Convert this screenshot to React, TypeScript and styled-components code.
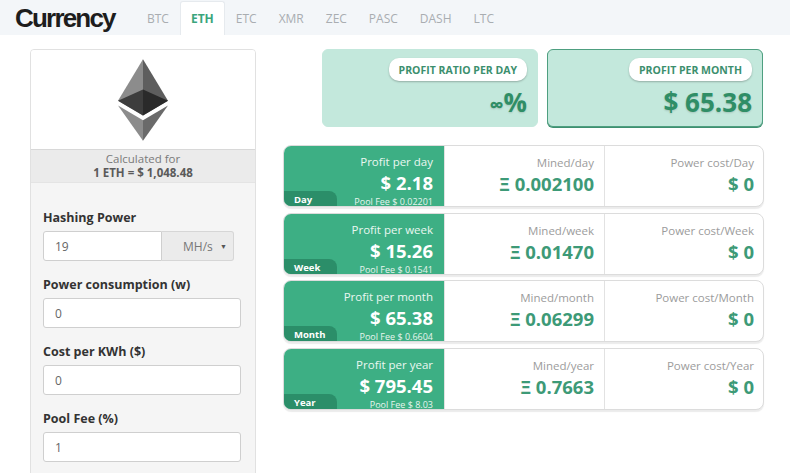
import React from "react";
import styled, { createGlobalStyle } from "styled-components";

const GlobalStyle = createGlobalStyle`
  body {
    margin: 0;
    background: #fff;
    font-family: "Open Sans", "Liberation Sans", sans-serif;
    color: #333;
  }
  * { box-sizing: border-box; }
`;

const TABS = ["BTC", "ETH", "ETC", "XMR", "ZEC", "PASC", "DASH", "LTC"];

type Period = {
  badge: string;
  name: string;
  profit: string;
  fee: string;
  mined: string;
};

const PERIODS: Period[] = [
  { badge: "Day", name: "day", profit: "$ 2.18", fee: "$ 0.02201", mined: "0.002100" },
  { badge: "Week", name: "week", profit: "$ 15.26", fee: "$ 0.1541", mined: "0.01470" },
  { badge: "Month", name: "month", profit: "$ 65.38", fee: "$ 0.6604", mined: "0.06299" },
  { badge: "Year", name: "year", profit: "$ 795.45", fee: "$ 8.03", mined: "0.7663" },
];

const EthLogo = () => (
  <svg width="50" height="82" viewBox="0 0 256 417">
    <polygon fill="#5e5e5e" points="127.96,0 125.17,9.5 125.17,285.17 127.96,287.96 255.92,212.32" />
    <polygon fill="#8c8c8c" points="127.96,0 0,212.32 127.96,287.96 127.96,154.16" />
    <polygon fill="#6a6a6a" points="127.96,312.19 126.39,314.11 126.39,412.31 127.96,416.91 256,236.59" />
    <polygon fill="#8c8c8c" points="127.96,416.91 127.96,312.19 0,236.59" />
    <polygon fill="#2a2a2a" points="127.96,287.96 255.92,212.32 127.96,154.16" />
    <polygon fill="#3d3d3d" points="0,212.32 127.96,287.96 127.96,154.16" />
  </svg>
);

export default function App() {
  return (
    <>
      <GlobalStyle />
      <Header>
        <Title>Currency</Title>
        <Tabs>
          {TABS.map((t) => (
            <Tab key={t} $active={t === "ETH"}>
              {t}
            </Tab>
          ))}
        </Tabs>
      </Header>
      <Main>
        <SidePanel>
          <LogoBox>
            <EthLogo />
          </LogoBox>
          <PriceStrip>
            <PriceLabel>Calculated for</PriceLabel>
            <PriceValue>1 ETH = $ 1,048.48</PriceValue>
          </PriceStrip>
          <Form>
            <Field>
              <Label>Hashing Power</Label>
              <InputGroup>
                <GroupInput defaultValue="19" />
                <UnitSelect>
                  <span>MH/s</span>
                  <Caret>▼</Caret>
                </UnitSelect>
              </InputGroup>
            </Field>
            <Field>
              <Label>Power consumption (w)</Label>
              <Input defaultValue="0" />
            </Field>
            <Field>
              <Label>Cost per KWh ($)</Label>
              <Input defaultValue="0" />
            </Field>
            <Field>
              <Label>Pool Fee (%)</Label>
              <Input defaultValue="1" />
            </Field>
          </Form>
        </SidePanel>
        <Results>
          <Summary>
            <SummaryCard>
              <Pill>PROFIT RATIO PER DAY</Pill>
              <SummaryValue>
                <Infinity>∞</Infinity>%
              </SummaryValue>
            </SummaryCard>
            <SummaryCard $highlight>
              <Pill>PROFIT PER MONTH</Pill>
              <SummaryValue>$ 65.38</SummaryValue>
            </SummaryCard>
          </Summary>
          <Rows>
            {PERIODS.map((p) => (
              <Row key={p.badge}>
                <ProfitCell>
                  <ProfitLabel>Profit per {p.name}</ProfitLabel>
                  <ProfitValue>{p.profit}</ProfitValue>
                  <PoolFee>Pool Fee {p.fee}</PoolFee>
                  <Badge>{p.badge}</Badge>
                </ProfitCell>
                <StatCell>
                  <StatLabel>Mined/{p.name}</StatLabel>
                  <StatValue>Ξ {p.mined}</StatValue>
                </StatCell>
                <StatCell>
                  <StatLabel>Power cost/{p.badge}</StatLabel>
                  <StatValue>$ 0</StatValue>
                </StatCell>
              </Row>
            ))}
          </Rows>
        </Results>
      </Main>
    </>
  );
}

const Header = styled.header`
  display: flex;
  align-items: flex-end;
  height: 35px;
  padding-left: 15px;
  background: #f3f6f9;
`;

const Title = styled.h1`
  width: 121px;
  margin: 0;
  align-self: center;
  font-family: "Liberation Sans", "Arial", sans-serif;
  font-weight: 700;
  font-size: 26px;
  line-height: 30px;
  color: #1d1d1d;
  letter-spacing: -1.8px;
`;

const Tabs = styled.nav`
  display: flex;
  height: 34px;
`;

const Tab = styled.div<{ $active?: boolean }>`
  display: flex;
  align-items: center;
  padding: 0 10px;
  font-size: 12px;
  color: ${(p) => (p.$active ? "#3aa57c" : "#a9adb1")};
  font-weight: ${(p) => (p.$active ? 700 : 400)};
  background: ${(p) => (p.$active ? "#fff" : "transparent")};
  border: 1px solid ${(p) => (p.$active ? "#e6eaee" : "transparent")};
  border-bottom: none;
  border-radius: 3px 3px 0 0;
`;

const Main = styled.div`
  display: grid;
  grid-template-columns: 226px 481px;
  gap: 27px;
  padding: 14px 0 0 30px;
`;

const SidePanel = styled.aside`
  border: 1px solid #e1e1e1;
  border-radius: 4px 4px 0 0;
  background: #f5f5f5;
  overflow: hidden;
`;

const LogoBox = styled.div`
  display: flex;
  justify-content: center;
  align-items: center;
  height: 99px;
  background: #fff;
`;

const PriceStrip = styled.div`
  height: 34px;
  padding-top: 2px;
  background: #ebebeb;
  border-top: 1px solid #d8d8d8;
  border-bottom: 1px solid #e4e4e4;
  text-align: center;
  font-size: 11.5px;
  line-height: 14px;
  color: #7a7a7a;
`;

const PriceLabel = styled.div``;

const PriceValue = styled.div`
  font-weight: 700;
  color: #5a5a5a;
`;

const Form = styled.div`
  display: flex;
  flex-direction: column;
  gap: 15px;
  padding: 26px 14px 20px 12px;
`;

const Field = styled.div`
  display: flex;
  flex-direction: column;
  gap: 5px;
`;

const Label = styled.label`
  font-size: 12.5px;
  font-weight: 700;
  color: #333;
`;

const Input = styled.input`
  width: 198px;
  height: 30px;
  padding: 0 11px;
  border: 1px solid #cfcfcf;
  border-radius: 3px;
  background: #fff;
  font-family: "Open Sans", "Liberation Sans", sans-serif;
  font-size: 12px;
  color: #666;
  outline: none;
`;

const InputGroup = styled.div`
  display: flex;
  width: 191px;
  height: 30px;
`;

const GroupInput = styled(Input)`
  width: 119px;
  height: 30px;
  border-radius: 3px 0 0 3px;
`;

const UnitSelect = styled.div`
  flex: 1;
  display: flex;
  align-items: center;
  justify-content: space-between;
  padding: 0 6px 0 21px;
  background: #ebebeb;
  border: 1px solid #d6d6d6;
  border-left: none;
  border-radius: 0 3px 3px 0;
  font-size: 12px;
  color: #777;
`;

const Caret = styled.span`
  font-size: 7px;
  color: #555;
`;

const Results = styled.section`
  display: flex;
  flex-direction: column;
  gap: 18px;
`;

const Summary = styled.div`
  display: flex;
  justify-content: flex-end;
  gap: 9px;
  padding-right: 1px;
`;

const SummaryCard = styled.div<{ $highlight?: boolean }>`
  width: 216px;
  height: 78px;
  display: flex;
  flex-direction: column;
  align-items: flex-end;
  padding: 8px 10px 0;
  background: #c3e8dc;
  border-radius: 6px;
  border: 1px solid ${(p) => (p.$highlight ? "#4e9f80" : "#c3e8dc")};
  box-shadow: ${(p) => (p.$highlight ? "0 1px 0 #3e8f70" : "none")};
`;

const Pill = styled.div`
  height: 23px;
  padding: 0 10px;
  display: flex;
  align-items: center;
  background: #fff;
  border-radius: 10px;
  box-shadow: 0 1px 2px rgba(0, 0, 0, 0.25);
  font-size: 10.5px;
  font-weight: 700;
  color: #3c8f6e;
`;

const SummaryValue = styled.div`
  margin-top: 3px;
  font-size: 26px;
  line-height: 36px;
  font-weight: 700;
  color: #2f8e66;
  text-shadow: 0 1px 2px rgba(0, 0, 0, 0.15);
`;

const Infinity = styled.span`
  font-size: 20px;
`;

const Rows = styled.div`
  display: flex;
  flex-direction: column;
  gap: 5.5px;
`;

const Row = styled.div`
  display: grid;
  grid-template-columns: 160px 160px 160px;
  height: 62px;
  border: 1px solid #dcdcdc;
  border-radius: 8px;
  box-shadow: 0 2px 1px rgba(0, 0, 0, 0.08);
  overflow: hidden;
  background: #fff;
`;

const ProfitCell = styled.div`
  position: relative;
  display: flex;
  flex-direction: column;
  align-items: flex-end;
  padding: 8px 11px 0 0;
  background: #3daf84;
  color: #fff;
`;

const ProfitLabel = styled.div`
  font-size: 11.5px;
  line-height: 16px;
  color: #eaf7f1;
`;

const ProfitValue = styled.div`
  font-size: 18.5px;
  font-weight: 700;
  line-height: 26px;
`;

const PoolFee = styled.div`
  font-size: 9px;
  line-height: 12px;
  color: #e6f5ee;
`;

const Badge = styled.div`
  position: absolute;
  left: 0;
  bottom: 0;
  width: 53px;
  height: 17px;
  padding-left: 10px;
  display: flex;
  align-items: center;
  background: #2b8e69;
  border-radius: 0 8px 0 0;
  font-size: 9.5px;
  font-weight: 700;
  color: #fff;
`;

const StatCell = styled.div`
  display: flex;
  flex-direction: column;
  align-items: flex-end;
  padding: 9px 10px 0 0;
  border-left: 1px solid #e2e2e2;
`;

const StatLabel = styled.div`
  font-size: 11.5px;
  line-height: 16px;
  color: #9c9c9c;
`;

const StatValue = styled.div`
  margin-top: 1px;
  font-size: 18.5px;
  line-height: 24px;
  font-weight: 700;
  color: #3d9a77;
`;
